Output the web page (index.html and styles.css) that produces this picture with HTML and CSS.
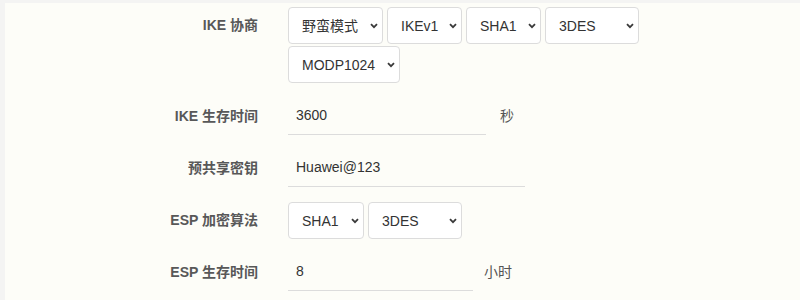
FILE: index.html
```html
<!DOCTYPE html>
<html lang="zh-CN">
<head>
  <meta charset="UTF-8">
  <meta name="viewport" content="width=device-width, initial-scale=1.0">
  <title>IPSec 配置</title>
  <link rel="stylesheet" href="styles.css">
</head>
<body>
<div class="panel">
  <form class="vpn-form">
    <div class="field">
      <label class="field-label">IKE 协商</label>
      <div class="field-body selects">
        <span class="select-box w-mode">
          <select><option>野蛮模式</option><option>主模式</option></select>
          <svg class="chevron" viewBox="0 0 8 6"><path d="M1 1.2l3 3 3-3"/></svg>
        </span>
        <span class="select-box w-ike">
          <select><option>IKEv1</option><option>IKEv2</option></select>
          <svg class="chevron" viewBox="0 0 8 6"><path d="M1 1.2l3 3 3-3"/></svg>
        </span>
        <span class="select-box w-hash">
          <select><option>SHA1</option><option>MD5</option></select>
          <svg class="chevron" viewBox="0 0 8 6"><path d="M1 1.2l3 3 3-3"/></svg>
        </span>
        <span class="select-box w-enc">
          <select><option>3DES</option><option>AES128</option></select>
          <svg class="chevron" viewBox="0 0 8 6"><path d="M1 1.2l3 3 3-3"/></svg>
        </span>
        <span class="select-box w-dh">
          <select><option>MODP1024</option><option>MODP2048</option></select>
          <svg class="chevron" viewBox="0 0 8 6"><path d="M1 1.2l3 3 3-3"/></svg>
        </span>
      </div>
    </div>

    <div class="field">
      <label class="field-label" for="ike-life">IKE 生存时间</label>
      <div class="field-body with-unit">
        <input type="text" id="ike-life" class="text-input w-ike-life" value="3600">
        <span class="unit unit-sec">秒</span>
      </div>
    </div>

    <div class="field">
      <label class="field-label" for="psk">预共享密钥</label>
      <div class="field-body with-unit">
        <input type="text" id="psk" class="text-input w-psk" value="Huawei@123">
      </div>
    </div>

    <div class="field">
      <label class="field-label">ESP 加密算法</label>
      <div class="field-body selects">
        <span class="select-box w-hash2">
          <select><option>SHA1</option><option>MD5</option></select>
          <svg class="chevron" viewBox="0 0 8 6"><path d="M1 1.2l3 3 3-3"/></svg>
        </span>
        <span class="select-box w-enc">
          <select><option>3DES</option><option>AES128</option></select>
          <svg class="chevron" viewBox="0 0 8 6"><path d="M1 1.2l3 3 3-3"/></svg>
        </span>
      </div>
    </div>

    <div class="field">
      <label class="field-label" for="esp-life">ESP 生存时间</label>
      <div class="field-body with-unit">
        <input type="text" id="esp-life" class="text-input w-esp-life" value="8">
        <span class="unit unit-hour">小时</span>
      </div>
    </div>
  </form>
</div>
</body>
</html>
```

FILE: styles.css
```css
body {
  margin: 0;
  padding: 0;
  background-color: #f4f4f3;
  font-family: "Liberation Sans", "Noto Sans CJK SC", sans-serif;
  font-size: 14px;
  color: #333;
}

.panel {
  box-sizing: border-box;
  margin: 3px 0 0 5px;
  padding-top: 4px;
  background-color: #fdfdf8;
  min-height: calc(100vh - 3px);
}

.field {
  display: grid;
  grid-template-columns: 253px 1fr;
  column-gap: 30px;
  margin-bottom: 15px;
}

.field:last-child {
  margin-bottom: 0;
}

.field-label {
  line-height: 36px;
  text-align: right;
  font-weight: bold;
  color: #585858;
}

.selects {
  display: flex;
  flex-wrap: wrap;
  gap: 2px 4px;
  max-width: 360px;
}

.select-box {
  position: relative;
  display: block;
  height: 37px;
}

.select-box select {
  -webkit-appearance: none;
  appearance: none;
  width: 100%;
  height: 37px;
  margin: 0;
  padding: 0 18px 0 13px;
  border: 1px solid #dcdcdc;
  border-radius: 4px;
  background: #fff;
  font-family: inherit;
  font-size: 14px;
  color: #333;
}

.chevron {
  position: absolute;
  right: 5px;
  top: 16px;
  width: 8px;
  height: 6px;
  fill: none;
  stroke: #3a3a3a;
  stroke-width: 1.8;
  pointer-events: none;
}

.w-mode { width: 95px; }
.w-ike { width: 75px; }
.w-hash { width: 75px; }
.w-enc { width: 94px; }
.w-dh { width: 112px; }
.w-hash2 { width: 76px; }

.with-unit {
  display: flex;
  align-items: center;
}

.text-input {
  box-sizing: border-box;
  height: 37px;
  margin: 0;
  padding: 0 8px 2px;
  border: 0;
  border-bottom: 1px solid #dcdcdc;
  background: transparent;
  font-family: inherit;
  font-size: 14px;
  color: #333;
  outline: none;
}

.w-ike-life { width: 198px; }
.w-psk { width: 237px; }
.w-esp-life { width: 185px; }

.unit {
  margin-bottom: 4px;
  color: #555;
}

.unit-sec { margin-left: 14px; }
.unit-hour { margin-left: 11px; }
```
